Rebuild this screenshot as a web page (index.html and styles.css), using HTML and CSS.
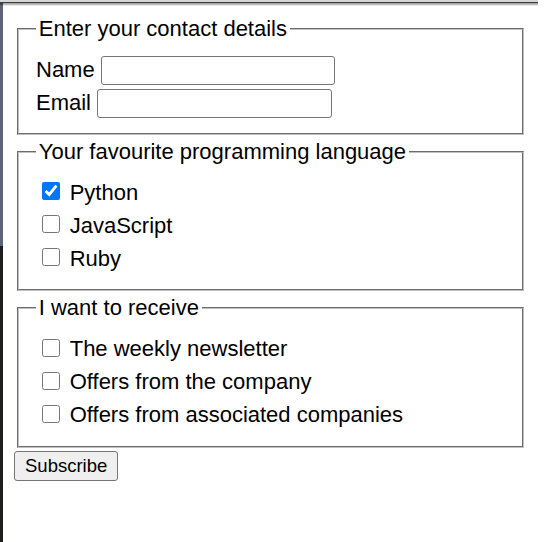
FILE: index.html
```html
<!DOCTYPE html>
<html lang="en">
<head>
<meta charset="utf-8">
<title>Subscribe form</title>
<link rel="stylesheet" href="styles.css">
</head>
<body>
<div class="screen">
  <div class="strip"></div>
  <div class="viewport">
    <form class="page" onsubmit="return false">
      <fieldset class="group">
        <legend class="legend">Enter your contact details</legend>
        <div class="rows">
          <div class="field"><label class="field-label" for="name">Name</label><input class="text-input name-input" id="name" type="text"></div>
          <div class="field"><label class="field-label" for="email">Email</label><input class="text-input" id="email" type="email"></div>
        </div>
      </fieldset>
      <fieldset class="group">
        <legend class="legend">Your favourite programming language</legend>
        <div class="rows">
          <label class="check"><input class="box" type="checkbox" checked><span>Python</span></label>
          <label class="check"><input class="box" type="checkbox"><span>JavaScript</span></label>
          <label class="check"><input class="box" type="checkbox"><span>Ruby</span></label>
        </div>
      </fieldset>
      <fieldset class="group">
        <legend class="legend">I want to receive</legend>
        <div class="rows">
          <label class="check"><input class="box" type="checkbox"><span>The weekly newsletter</span></label>
          <label class="check"><input class="box" type="checkbox"><span>Offers from the company</span></label>
          <label class="check"><input class="box" type="checkbox"><span>Offers from associated companies</span></label>
        </div>
      </fieldset>
      <div class="actions"><button class="button" type="submit">Subscribe</button></div>
    </form>
  </div>
  <div class="topbar"></div>
</div>
</body>
</html>
```
FILE: styles.css
```css
html, body {
  margin: 0;
  padding: 0;
  background: #ffffff;
}

.screen {
  position: relative;
  display: flex;
  width: 552px;
  height: 542px;
  overflow: hidden;
  font-family: "Liberation Sans", Arial, sans-serif;
  color: #000;
}

.strip {
  flex: 0 0 3px;
  background: linear-gradient(#5d6476 0 246px, #1e1e20 246px 100%);
}

.viewport {
  flex: 0 0 535px;
  background: #fff;
}

.topbar {
  position: absolute;
  left: 0;
  top: 0;
  width: 538px;
  height: 6px;
  background: linear-gradient(#d6d6d6 0 2px, #3a3a3a 2px 3px, rgba(0,0,0,0.35) 3px 4px, rgba(0,0,0,0) 6px);
}

.page {
  padding: 12px 11px 0 11px;
  font-size: 22px;
  line-height: 33px;
}

.group {
  margin: 0 2.75px;
  padding: 7.7px 17.25px 14.5px;
  border: 2px groove #c0c0c0;
  min-width: 0;
}

.legend {
  padding: 0 2.75px;
  line-height: 33px;
}

.rows {
  display: flex;
  flex-direction: column;
}

.field {
  display: flex;
  align-items: flex-end;
  height: 33px;
  gap: 6.1px;
}

.field-label {
  line-height: 33px;
}

.text-input {
  box-sizing: border-box;
  width: 235px;
  height: 29px;
  margin: 0 0 0.5px 0;
  padding: 1px 3px;
  border: 1px solid #767676;
  border-radius: 3px;
  background: #fff;
  font: 18px "Liberation Sans", Arial, sans-serif;
}

.name-input {
  width: 234px;
}

.check {
  display: flex;
  align-items: flex-end;
  height: 33px;
}

.box {
  width: 18px;
  height: 18px;
  margin: 0 10.2px 8.5px 5.5px;
  accent-color: #0075ff;
}

.check span {
  line-height: 33px;
}

.actions {
  display: flex;
  padding-top: 3.5px;
}

.button {
  box-sizing: border-box;
  height: 30px;
  padding: 0 10px;
  border: 1px solid #767676;
  border-radius: 3px;
  background: #efefef;
  color: #000;
  font: 18.5px "Liberation Sans", Arial, sans-serif;
  line-height: 28px;
}
```
